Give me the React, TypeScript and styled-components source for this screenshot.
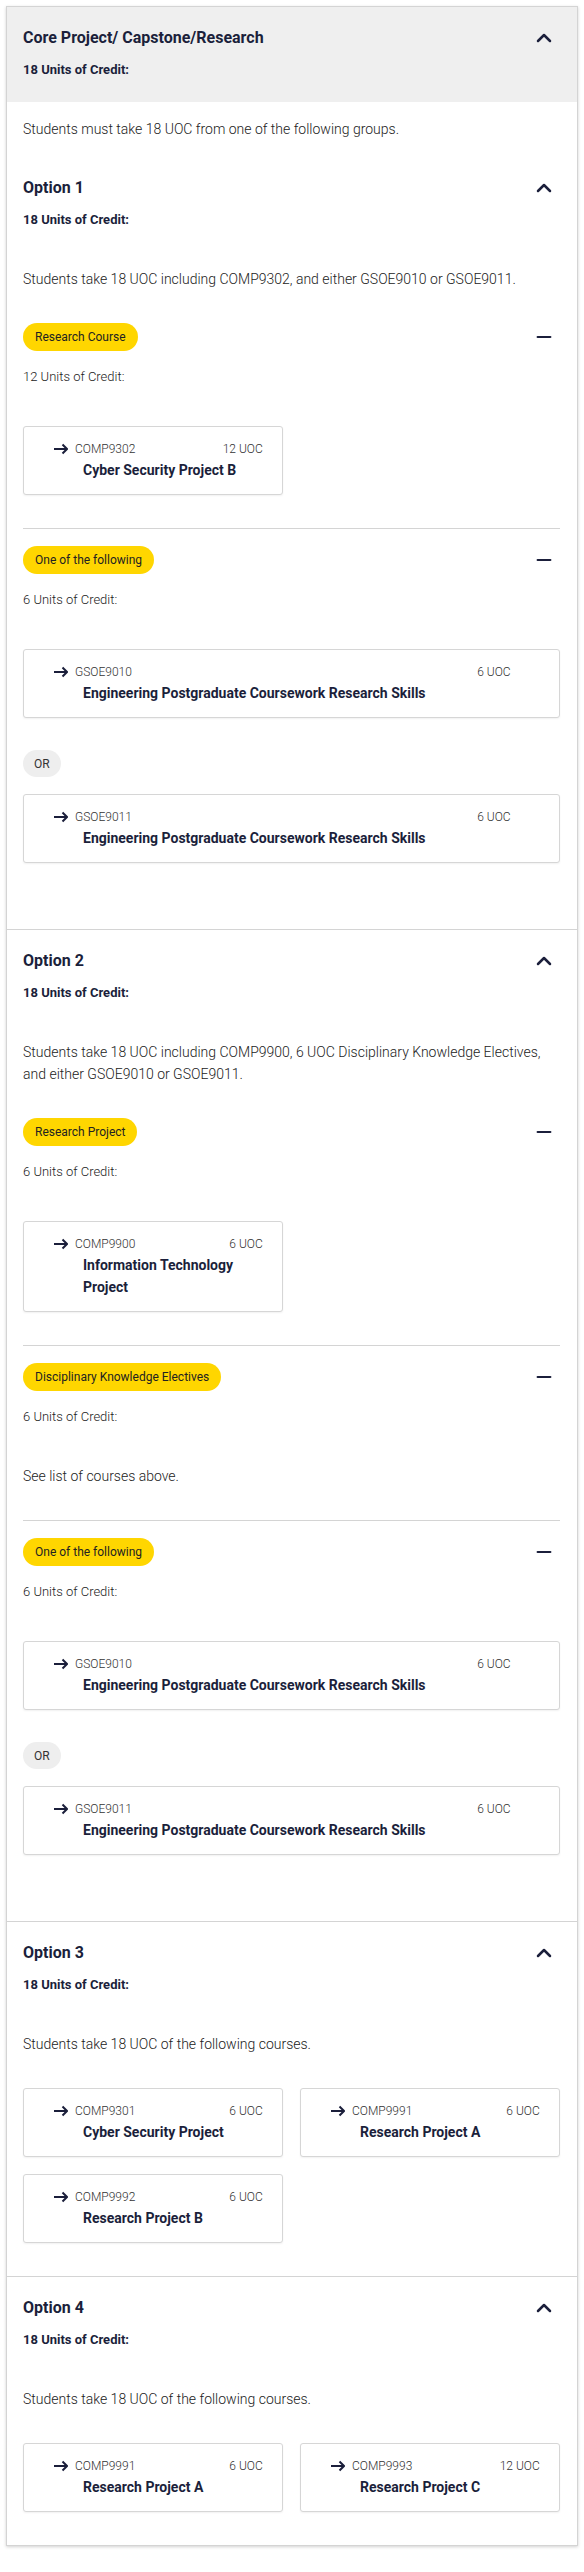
import React from 'react';
import styled, { createGlobalStyle } from 'styled-components';
import { ChevronUp, Minus } from 'lucide-react';

const GlobalStyle = createGlobalStyle`
  body {
    margin: 0;
    background: #fff;
    font-family: Roboto, "Liberation Sans", Arial, sans-serif;
    color: #333;
  }
`;

const navy = '#1b1f3b';

type Course = { code: string; uoc: string; title: string };

type Group = {
  label: string;
  units: string;
  note?: string;
  courses?: Course[];
  oneOf?: boolean;
};

type Option = {
  title: string;
  units: string;
  description: string;
  groups?: Group[];
  courses?: Course[];
};

const researchSkills = 'Engineering Postgraduate Coursework Research Skills';

const oneOfResearchSkills: Group = {
  label: 'One of the following',
  units: '6 Units of Credit:',
  oneOf: true,
  courses: [
    { code: 'GSOE9010', uoc: '6 UOC', title: researchSkills },
    { code: 'GSOE9011', uoc: '6 UOC', title: researchSkills },
  ],
};

const options: Option[] = [
  {
    title: 'Option 1',
    units: '18 Units of Credit:',
    description: 'Students take 18 UOC including COMP9302, and either GSOE9010 or GSOE9011.',
    groups: [
      {
        label: 'Research Course',
        units: '12 Units of Credit:',
        courses: [{ code: 'COMP9302', uoc: '12 UOC', title: 'Cyber Security Project B' }],
      },
      oneOfResearchSkills,
    ],
  },
  {
    title: 'Option 2',
    units: '18 Units of Credit:',
    description:
      'Students take 18 UOC including COMP9900, 6 UOC Disciplinary Knowledge Electives, and either GSOE9010 or GSOE9011.',
    groups: [
      {
        label: 'Research Project',
        units: '6 Units of Credit:',
        courses: [{ code: 'COMP9900', uoc: '6 UOC', title: 'Information Technology Project' }],
      },
      {
        label: 'Disciplinary Knowledge Electives',
        units: '6 Units of Credit:',
        note: 'See list of courses above.',
      },
      oneOfResearchSkills,
    ],
  },
  {
    title: 'Option 3',
    units: '18 Units of Credit:',
    description: 'Students take 18 UOC of the following courses.',
    courses: [
      { code: 'COMP9301', uoc: '6 UOC', title: 'Cyber Security Project' },
      { code: 'COMP9991', uoc: '6 UOC', title: 'Research Project A' },
      { code: 'COMP9992', uoc: '6 UOC', title: 'Research Project B' },
    ],
  },
  {
    title: 'Option 4',
    units: '18 Units of Credit:',
    description: 'Students take 18 UOC of the following courses.',
    courses: [
      { code: 'COMP9991', uoc: '6 UOC', title: 'Research Project A' },
      { code: 'COMP9993', uoc: '12 UOC', title: 'Research Project C' },
    ],
  },
];

const Page = styled.div`
  padding: 6px;
`;

const Panel = styled.div`
  background: #fff;
  border: 1px solid #d4d4d4;
  box-shadow: 0 1px 3px rgba(0, 0, 0, 0.18);
`;

const PanelHeader = styled.div`
  background: #efefef;
  padding: 15px 17px 22px 16px;
`;

const TitleRow = styled.div`
  display: flex;
  align-items: center;
  justify-content: space-between;
  height: 32px;
`;

const Title = styled.h2`
  margin: 0;
  font-size: 16px;
  font-weight: 700;
  line-height: 32px;
  color: ${navy};
`;

const ToggleButton = styled.button`
  width: 32px;
  height: 32px;
  padding: 0;
  border: none;
  background: transparent;
  display: flex;
  align-items: center;
  justify-content: center;
  color: ${navy};
  cursor: pointer;
`;

const Units = styled.div<{ $bold?: boolean }>`
  margin-top: ${({ $bold }) => ($bold ? '6px' : '16px')};
  font-size: 13px;
  line-height: 20px;
  font-weight: ${({ $bold }) => ($bold ? 700 : 300)};
  color: ${({ $bold }) => ($bold ? navy : '#222')};
`;

const Intro = styled.p`
  margin: 0;
  padding: 16px 17px 17px 16px;
  font-size: 14px;
  font-weight: 300;
  line-height: 22px;
  color: #222;
`;

const Section = styled.section<{ $first?: boolean }>`
  padding: 15px 17px 33px 16px;
  border-top: ${({ $first }) => ($first ? 'none' : '1px solid #d4d4d4')};
`;

const Description = styled.p`
  margin: 38px 0 0;
  font-size: 14px;
  font-weight: 300;
  line-height: 22px;
  color: #222;
`;

const GroupBlock = styled.div<{ $first?: boolean }>`
  margin-top: ${({ $first }) => ($first ? '16px' : '0')};
  padding: 17px 0 33px;
  border-top: ${({ $first }) => ($first ? 'none' : '1px solid #d4d4d4')};
`;

const GroupRow = styled.div`
  display: flex;
  align-items: center;
  justify-content: space-between;
  height: 28px;
`;

const Badge = styled.span`
  display: inline-flex;
  align-items: center;
  height: 28px;
  padding: 0 12px;
  border-radius: 14px;
  background: #ffd600;
  font-size: 12px;
  color: #222;
`;

const Note = styled.p`
  margin: 38px 0 0;
  font-size: 14px;
  font-weight: 300;
  line-height: 22px;
  color: #222;
`;

const CourseGrid = styled.div<{ $gap: number }>`
  margin-top: ${({ $gap }) => $gap}px;
  display: grid;
  grid-template-columns: 1fr 1fr;
  gap: 17px;
`;

const OneOfList = styled.div`
  margin-top: 39px;
  display: flex;
  flex-direction: column;
  align-items: flex-start;
`;

const OrChip = styled.span`
  margin: 32px 0 17px;
  display: inline-flex;
  align-items: center;
  height: 27px;
  padding: 0 11px;
  border-radius: 14px;
  background: #eeeeee;
  font-size: 12px;
  color: #333;
`;

const CourseCard = styled.a<{ $wide?: boolean }>`
  display: block;
  box-sizing: border-box;
  width: ${({ $wide }) => ($wide ? '100%' : 'auto')};
  padding: 12px calc(10.5% - 8px) 13px 30px;
  border: 1px solid #d6d6d6;
  border-radius: 3px;
  background: #fff;
  box-shadow: 0 1px 2px rgba(0, 0, 0, 0.06);
  text-decoration: none;
`;

const CodeRow = styled.div`
  display: flex;
  align-items: center;
  height: 20px;
  font-size: 12px;
  font-weight: 300;
  color: #333;
`;

const Code = styled.span`
  margin-left: 7px;
  flex: 1;
`;

const CourseTitle = styled.div`
  margin-left: 29px;
  font-size: 14px;
  line-height: 22px;
  font-weight: 700;
  color: ${navy};
`;

const Arrow = () => (
  <svg width="14" height="12" viewBox="0 0 14 12" fill="none" stroke={navy} strokeWidth="2">
    <path d="M0 6h12.5" />
    <path d="M8.5 1.5 13 6l-4.5 4.5" />
  </svg>
);

const CourseItem = ({ course, wide }: { course: Course; wide?: boolean }) => (
  <CourseCard $wide={wide}>
    <CodeRow>
      <Arrow />
      <Code>{course.code}</Code>
      <span>{course.uoc}</span>
    </CodeRow>
    <CourseTitle>{course.title}</CourseTitle>
  </CourseCard>
);

const CourseGroup = ({ group, first }: { group: Group; first: boolean }) => (
  <GroupBlock $first={first}>
    <GroupRow>
      <Badge>{group.label}</Badge>
      <ToggleButton aria-label="collapse">
        <Minus size={22} strokeWidth={2.2} />
      </ToggleButton>
    </GroupRow>
    <Units>{group.units}</Units>
    {group.note && <Note>{group.note}</Note>}
    {group.courses && group.oneOf && (
      <OneOfList>
        {group.courses.map((course, index) => (
          <React.Fragment key={course.code}>
            {index > 0 && <OrChip>OR</OrChip>}
            <CourseItem course={course} wide />
          </React.Fragment>
        ))}
      </OneOfList>
    )}
    {group.courses && !group.oneOf && (
      <CourseGrid $gap={39}>
        {group.courses.map((course) => (
          <CourseItem key={course.code} course={course} />
        ))}
      </CourseGrid>
    )}
  </GroupBlock>
);

const OptionSection = ({ option, first }: { option: Option; first: boolean }) => (
  <Section $first={first}>
    <TitleRow>
      <Title>{option.title}</Title>
      <ToggleButton aria-label="collapse">
        <ChevronUp size={24} strokeWidth={2.5} />
      </ToggleButton>
    </TitleRow>
    <Units $bold>{option.units}</Units>
    <Description>{option.description}</Description>
    {option.groups?.map((group, index) => (
      <CourseGroup key={group.label} group={group} first={index === 0} />
    ))}
    {option.courses && (
      <CourseGrid $gap={33}>
        {option.courses.map((course) => (
          <CourseItem key={course.code} course={course} />
        ))}
      </CourseGrid>
    )}
  </Section>
);

const App = () => (
  <>
    <GlobalStyle />
    <Page>
      <Panel>
        <PanelHeader>
          <TitleRow>
            <Title>Core Project/ Capstone/Research</Title>
            <ToggleButton aria-label="collapse">
              <ChevronUp size={24} strokeWidth={2.5} />
            </ToggleButton>
          </TitleRow>
          <Units $bold>18 Units of Credit:</Units>
        </PanelHeader>
        <Intro>Students must take 18 UOC from one of the following groups.</Intro>
        {options.map((option, index) => (
          <OptionSection key={option.title} option={option} first={index === 0} />
        ))}
      </Panel>
    </Page>
  </>
);

export default App;
